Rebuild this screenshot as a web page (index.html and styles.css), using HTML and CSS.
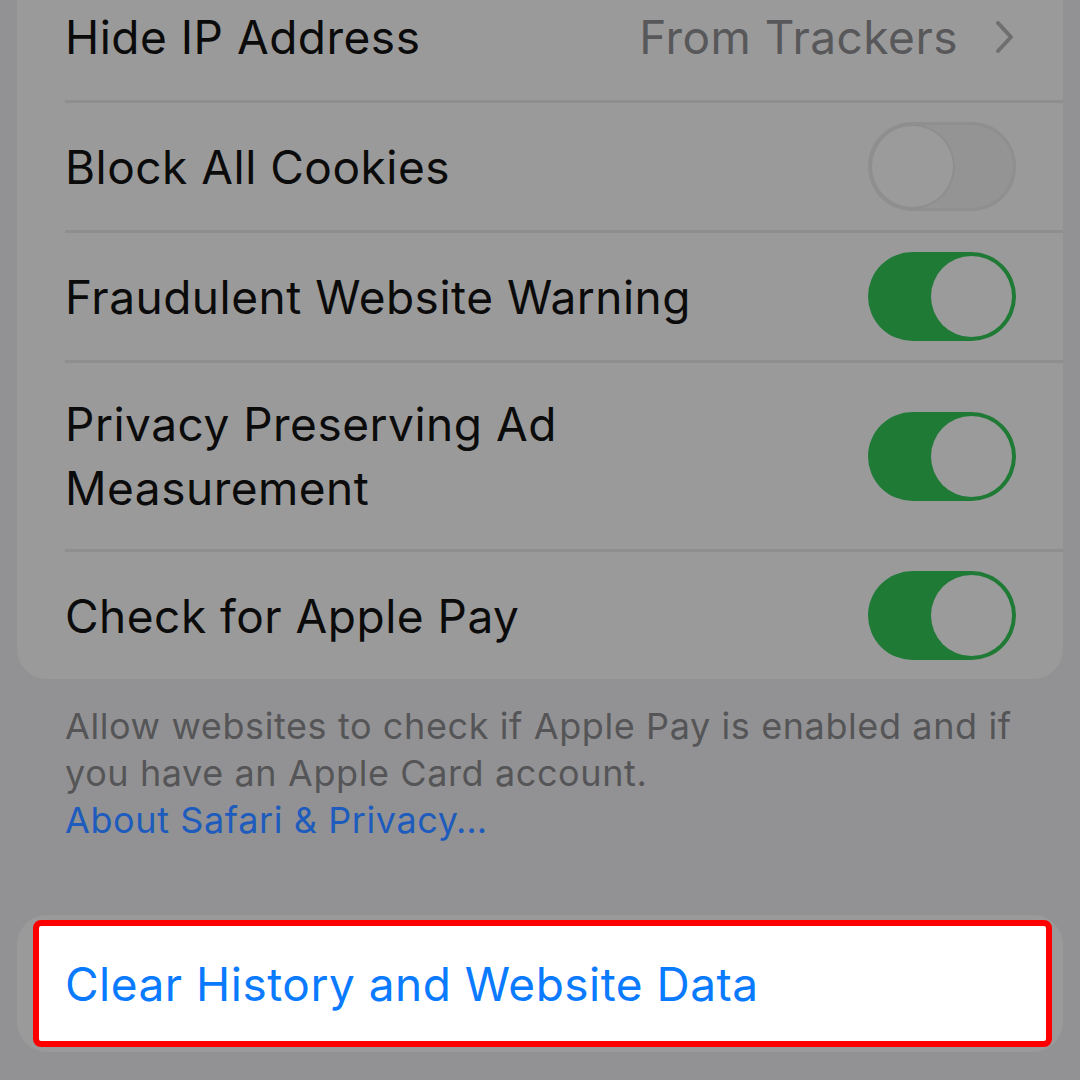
FILE: index.html
```html
<!DOCTYPE html>
<html lang="en">
<head>
<meta charset="utf-8">
<link rel="stylesheet" href="styles.css">
</head>
<body>
<div class="page">
  <div class="card">
    <div class="row">
      <div class="row-inner">
        <span class="label">Hide IP Address</span>
        <span class="value">From Trackers</span>
        <svg class="chev" width="22" height="36" viewBox="0 0 22 36"><path d="M4 4 L17 18 L4 32" fill="none" stroke="#6f6f70" stroke-width="4" stroke-linecap="round" stroke-linejoin="round"/></svg>
      </div>
    </div>
    <div class="row">
      <div class="row-inner">
        <span class="label">Block All Cookies</span>
        <span class="toggle off"><span class="thumb"></span></span>
      </div>
    </div>
    <div class="row">
      <div class="row-inner">
        <span class="label">Fraudulent Website Warning</span>
        <span class="toggle on"><span class="thumb"></span></span>
      </div>
    </div>
    <div class="row tall">
      <div class="row-inner">
        <span class="label">Privacy Preserving Ad<br>Measurement</span>
        <span class="toggle on"><span class="thumb"></span></span>
      </div>
    </div>
    <div class="row">
      <div class="row-inner last">
        <span class="label">Check for Apple Pay</span>
        <span class="toggle on"><span class="thumb"></span></span>
      </div>
    </div>
  </div>
  <div class="footer">
    <p>Allow websites to check if Apple Pay is enabled and if you have an Apple Card account.</p>
    <a class="link">About Safari &amp; Privacy…</a>
  </div>
  <div class="card action-card">
    <div class="highlight">
      <span class="action">Clear History and Website Data</span>
    </div>
  </div>
</div>
</body>
</html>
```

FILE: styles.css
```css
* { box-sizing: border-box; }
html, body {
  margin: 0;
  padding: 0;
  width: 1080px;
  height: 1080px;
  overflow: hidden;
  background: #929294;
  font-family: Inter, "Noto Sans", "Liberation Sans", sans-serif;
}
.page {
  padding: 0 17px;
}
.card {
  background: #9a9a9a;
  border-radius: 30px;
  margin-top: -27px;
}
.row {
  padding-left: 48px;
}
.row-inner {
  display: flex;
  align-items: center;
  min-height: 130px;
  padding-right: 47px;
  border-bottom: 3px solid #8e8e8e;
}
.row.tall .row-inner { min-height: 189px; }
.row-inner.last { border-bottom: none; min-height: 127px; }
.label {
  flex: 1;
  font-size: 46px;
  line-height: 64px;
  color: #0b0b0b;
  letter-spacing: 0.5px;
}
.value {
  font-size: 46px;
  letter-spacing: 0.5px;
  color: #58585a;
  margin-right: 36px;
}
.chev { display: block; }
.toggle {
  position: relative;
  width: 148px;
  height: 89px;
  border-radius: 45px;
  flex: none;
}
.toggle.off {
  background: #949494;
  box-shadow: inset 0 0 0 3px #8f8f8f;
}
.toggle.on {
  background: #1f7a36;
}
.toggle .thumb {
  position: absolute;
  top: 4px;
  width: 81px;
  height: 81px;
  border-radius: 50%;
  background: #9b9b9b;
}
.toggle.off .thumb { left: 4px; box-shadow: 0 0 0 2px #8e8e8e; }
.toggle.on .thumb { right: 4px; }
.footer {
  padding: 24px 48px 0 48px;
  font-size: 36px;
  line-height: 47px;
  letter-spacing: 0.6px;
  color: #555557;
}
.footer p { margin: 0; }
.link { color: #1d5bbd; display: block; }
.action-card {
  margin-top: 71px;
  padding: 5px 11px 5px 16px;
  border-radius: 30px;
}
.highlight {
  background: #ffffff;
  border: 6px solid #ff0000;
  border-radius: 8px;
  height: 127px;
  display: flex;
  align-items: center;
  padding-left: 26px;
}
.action {
  font-size: 46px;
  letter-spacing: 0.5px;
  color: #0a7aff;
}
```
